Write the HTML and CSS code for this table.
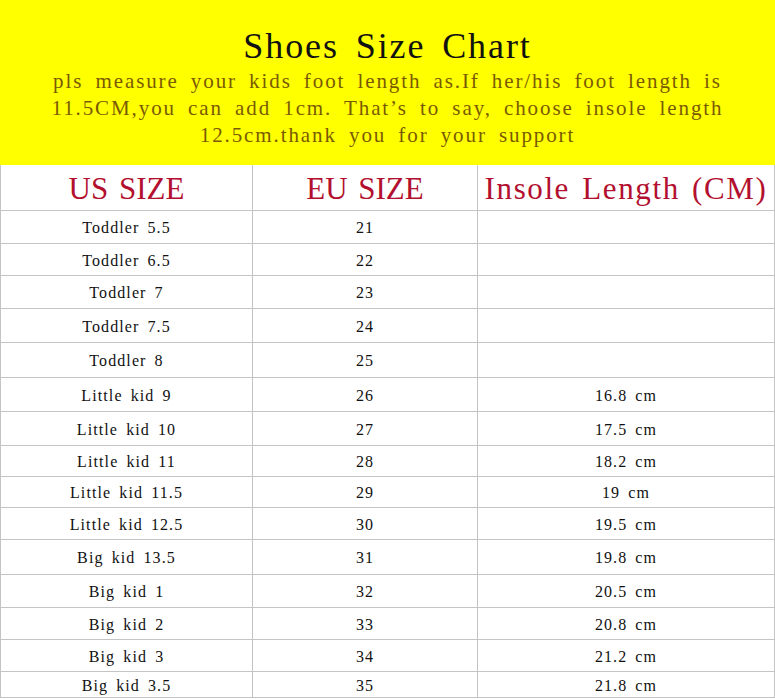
FILE: index.html
```html
<!DOCTYPE html>
<html lang="en">
<head>
<meta charset="utf-8">
<title>Shoes Size Chart</title>
<link rel="stylesheet" href="styles.css">
</head>
<body>
<div class="banner">
  <h1 class="title">Shoes Size Chart</h1>
  <p class="note">pls measure your kids foot length as.If her/his foot length is<br>11.5CM,you can add 1cm. That’s to say, choose insole length<br>12.5cm.thank you for your support</p>
</div>
<div class="chart">
  <div class="cell head">US SIZE</div><div class="cell head">EU SIZE</div><div class="cell head head-wide">Insole Length (CM)</div>
  <div class="cell">Toddler 5.5</div><div class="cell">21</div><div class="cell"></div>
  <div class="cell">Toddler 6.5</div><div class="cell">22</div><div class="cell"></div>
  <div class="cell">Toddler 7</div><div class="cell">23</div><div class="cell"></div>
  <div class="cell">Toddler 7.5</div><div class="cell">24</div><div class="cell"></div>
  <div class="cell">Toddler 8</div><div class="cell">25</div><div class="cell"></div>
  <div class="cell">Little kid 9</div><div class="cell">26</div><div class="cell">16.8 cm</div>
  <div class="cell">Little kid 10</div><div class="cell">27</div><div class="cell">17.5 cm</div>
  <div class="cell">Little kid 11</div><div class="cell">28</div><div class="cell">18.2 cm</div>
  <div class="cell">Little kid 11.5</div><div class="cell">29</div><div class="cell">19 cm</div>
  <div class="cell">Little kid 12.5</div><div class="cell">30</div><div class="cell">19.5 cm</div>
  <div class="cell">Big kid 13.5</div><div class="cell">31</div><div class="cell">19.8 cm</div>
  <div class="cell">Big kid 1</div><div class="cell">32</div><div class="cell">20.5 cm</div>
  <div class="cell">Big kid 2</div><div class="cell">33</div><div class="cell">20.8 cm</div>
  <div class="cell">Big kid 3</div><div class="cell">34</div><div class="cell">21.2 cm</div>
  <div class="cell">Big kid 3.5</div><div class="cell">35</div><div class="cell">21.8 cm</div>
</div>
</body>
</html>
```

FILE: styles.css
```css
html, body {
  margin: 0;
  padding: 0;
  background: #ffffff;
}
body {
  width: 775px;
  font-family: "Liberation Serif", "DejaVu Serif", serif;
  color: #111;
}
.banner {
  background: #ffff00;
  height: 165px;
  box-sizing: border-box;
  padding-top: 26px;
  text-align: center;
}
.title {
  margin: 0;
  font-weight: normal;
  font-size: 36px;
  line-height: 40px;
  letter-spacing: 1.9px;
  word-spacing: 6px;
  color: #111;
}
.note {
  margin: 2px 0 0;
  font-size: 21px;
  line-height: 27px;
  letter-spacing: 1.9px;
  word-spacing: 5px;
  color: #7a5a00;
}
.chart {
  display: grid;
  grid-template-columns: 251px 224px 296px;
  grid-template-rows: 45px 32px 31px 32px 33px 34px 33px 33px 30px 30px 31px 34px 32px 31px 31px 25px;
  gap: 1px;
  background: #c4c4c4;
  border: 1px solid #c4c4c4;
  border-top: 0;
  width: 775px;
  box-sizing: border-box;
}
.cell {
  background: #ffffff;
  display: flex;
  align-items: center;
  justify-content: center;
  padding-top: 2px;
  font-size: 16px;
  letter-spacing: 1.1px;
  word-spacing: 3px;
  color: #111;
  white-space: nowrap;
}
.head {
  padding-top: 3px;
  font-size: 31px;
  letter-spacing: 0;
  word-spacing: 3px;
  color: #b3102f;
}
.head-wide {
  letter-spacing: 1.6px;
}
```
